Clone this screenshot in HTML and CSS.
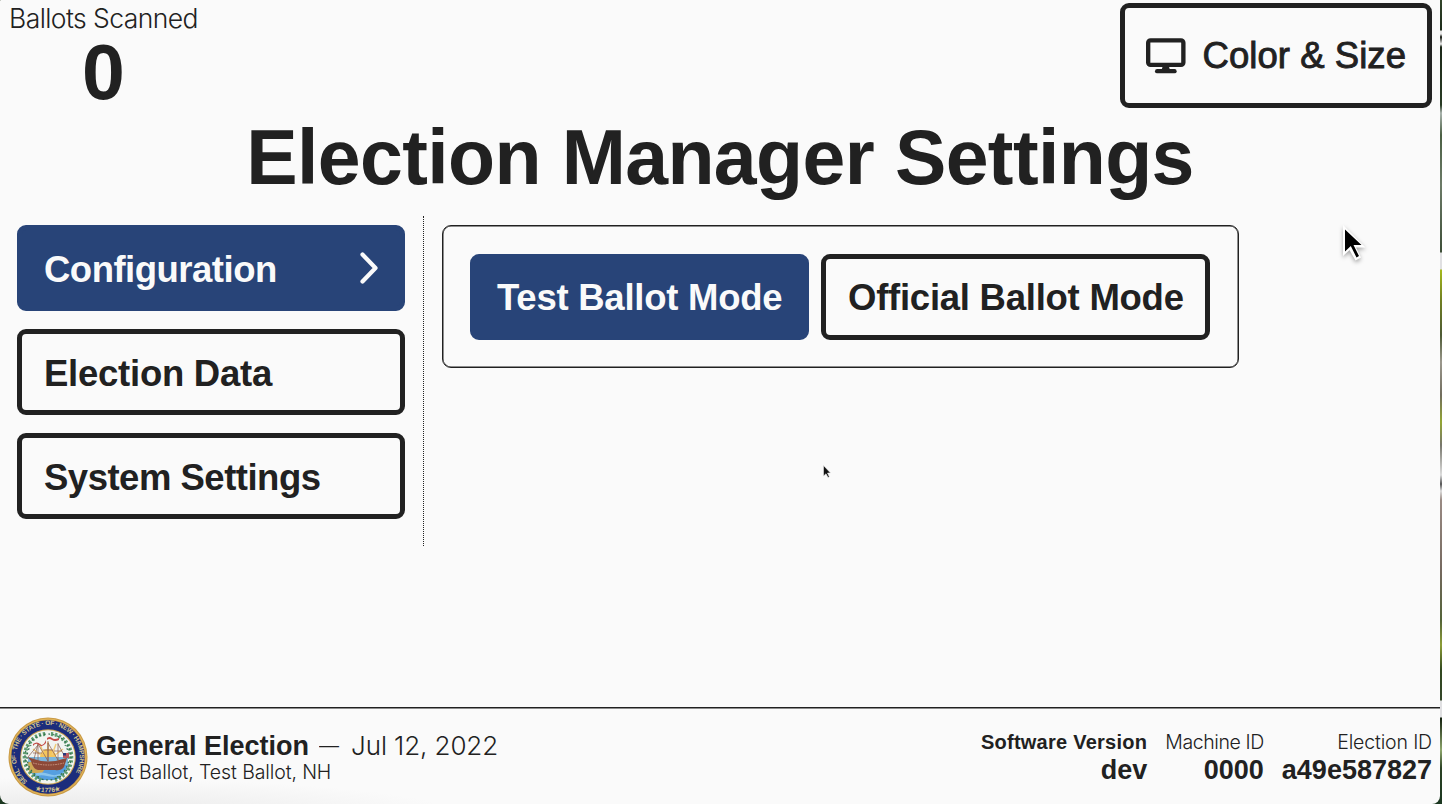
FILE: index.html
```html
<!DOCTYPE html>
<html lang="en">
<head>
<meta charset="utf-8">
<title>Election Manager Settings</title>
<link rel="stylesheet" href="styles.css">
</head>
<body>
<div class="screen">
  <header class="top">
    <div class="counter">
      <div class="counter-label">Ballots Scanned</div>
      <div class="counter-value">0</div>
    </div>
    <button class="btn display-btn">
      <svg class="monitor" viewBox="0 0 40 36" width="40" height="36">
        <rect x="2.2" y="2.2" width="35.6" height="24.8" rx="2.4" fill="none" stroke="#212121" stroke-width="4.4"/>
        <path d="M17 28h6l1.2 4h-8.400z" fill="#212121"/>
        <path d="M11.300 33.300h17.500" stroke="#212121" stroke-width="4.400" stroke-linecap="round"/>
      </svg>
      <span class="display-text">Color &amp; Size</span>
    </button>
  </header>
  <h1>Election Manager Settings</h1>
  <main class="main">
    <nav class="tabs">
      <button class="btn tab primary"><span class="t-conf">Configuration</span>
        <svg class="chevron" viewBox="0 0 20 34" width="20" height="34"><path d="M3.500 3.500L16.500 17L3.500 30.500" fill="none" stroke="#fafafa" stroke-width="4.200" stroke-linecap="round" stroke-linejoin="round"/></svg>
      </button>
      <button class="btn tab"><span>Election Data</span></button>
      <button class="btn tab"><span class="t-sys">System Settings</span></button>
    </nav>
    <section class="panel">
      <button class="btn primary mode-test"><span>Test Ballot Mode</span></button>
      <button class="btn mode-official"><span>Official Ballot Mode</span></button>
    </section>
  </main>
  <footer class="footer">
    <svg class="seal" viewBox="-40 -40 80 80" width="80" height="80">
      <defs>
        <path id="ring" d="M-20.500 24.400A31.900 31.900 0 1 1 20.500 24.400"/>
        <path id="ring-low" d="M-25 25A35.400 35.400 0 0 0 25 25"/>
        <clipPath id="disc"><circle r="26.800"/></clipPath>
      </defs>
      <circle r="39.500" fill="#c99a45"/>
      <circle r="38" fill="none" stroke="#e2b65c" stroke-width="1"/>
      <circle r="36.700" fill="#1c2d7c"/>
      <circle r="27.800" fill="#c9a24f"/>
      <circle r="26.800" fill="#f1f4f1"/>
      <g clip-path="url(#disc)">
        <rect x="-20" y="0" width="40" height="9" fill="#7db7dd"/>
        <path d="M-8 0a8 8 0 0 1 16 0z" fill="#f5c65c"/>
        <path d="M0-1V-15M-4-2L-8-13M4-2L8-13M-7-2L-15-8M7-2L15-8" stroke="#f1cc7a" stroke-width="1.500"/>
        <path d="M-20 8H20Q17 19 8 23H-8Q-17 19-20 8z" fill="#559fe0"/>
        <path d="M-20 5h12l-2 4 7 3-3 4h-13z" fill="#cfa956"/>
        <path d="M-15 17q9-3 16 0t15-2v3q-10 3-17 1t-14 1z" fill="#8bc5ed"/>
      </g>
      <g fill="none" stroke="#5f9d70" stroke-width="4" stroke-dasharray="2.200 1.900">
        <path d="M-7 23A24 24 0 0 1-16-17Q-10-23-2-23"/>
        <path d="M7 23A24 24 0 0 0 16-17Q10-23 2-23"/>
      </g>
      <g fill="none" stroke="#2f6d4c" stroke-width="1.200" stroke-dasharray="1.800 2.700">
        <circle r="23"/><path d="M-9 20A22 22 0 0 1-17-12M9 20A22 22 0 0 0 17-12"/>
      </g>
      <path d="M-17 4L-20.500 0L-14 2Q0 7 15 2L19 1L16 10Q13 14 7 13H-10Q-15 12-17 4z" fill="#8d4938"/>
      <path d="M-15 6Q0 10 16 6" fill="none" stroke="#d3a28c" stroke-width=".9" stroke-dasharray="1.500 1"/>
      <path d="M-10 4V-14M0 6V-16M10 4V-14M-15-4H-6M-5-7H5M6-6H14M-14 2L-10-13L0 4L0-14L10 3M-20 0L-10-12M10-13L17 0" fill="none" stroke="#8a5a4c" stroke-width=".7"/>
      <path d="M-15-13q4-3 7 0t6-4v3q-4 5-7 2t-6 1zM-1-19q3-2 5 0t7 0v2q-4 2-7 0t-5 0z" fill="#c44c48"/>
      <path d="M15-4h6v5h-6z" fill="#b85a61"/><path d="M15-4h3v2.500h-3z" fill="#29397c"/>
      <text class="seal-text"><textPath href="#ring" startOffset="0" textLength="144">SEAL · OF · THE · STATE · OF · NEW · HAMPSHIRE</textPath></text>
      <text class="seal-text"><textPath href="#ring-low" startOffset="50%" text-anchor="middle">★1776★</textPath></text>
    </svg>
    <div class="election">
      <div class="election-title"><b>General Election</b><span class="dash">—</span><span class="date">Jul 12, 2022</span></div>
      <div class="election-sub">Test Ballot, Test Ballot, NH</div>
    </div>
    <dl class="meta">
      <div><dt class="sw">Software Version</dt><dd>dev</dd></div>
      <div><dt>Machine ID</dt><dd>0000</dd></div>
      <div><dt class="eid">Election ID</dt><dd>a49e587827</dd></div>
    </dl>
  </footer>
</div>
<svg class="cursor cursor-large" viewBox="0 0 30 46" width="30" height="46"><path d="M3 2V33L9.500 27L15.500 37.500L21 34.500L16 24.500H25.500Z" fill="#fff"/><path d="M5 6.500V28.500L10.800 23L16.500 34.500L19 33L13.500 22H21.500Z" fill="#000"/></svg>
<svg class="cursor cursor-small" viewBox="0 0 10 16" width="10" height="16"><path d="M1.500 1.500V12L4 9.800L6 13.500L7.300 12.700L5.500 9H8.500Z" fill="#111" stroke="#e8e8e8" stroke-width=".6"/></svg>
</body>
</html>
```
FILE: styles.css
```css
* { box-sizing: border-box; }
html { height: 100%; }
body {
  margin: 0;
  height: 804px;
  overflow: hidden;
  padding-right: 2px;
  font-family: "Liberation Sans", Arial, sans-serif;
  color: #212121;
  background: linear-gradient(#33452a 0, #1c2b1a 30px, #e8e8e8 31px, #e8e8e8 34px, #151a12 37px, #eee 44px, #1c2819 47px, #283b24 105px, #a9b3ad 113px, #4b6044 135px, #6c7b68 185px, #3e4f38 252px, #e0e0e2 253px, #e0e0e2 269px, #a5b91d 270px, #718022 300px, #4d5a34 335px, #9b988d 362px, #716d5e 395px, #93a633 422px, #77766c 445px, #ddd 475px, #555 484px, #ddd 491px, #9a8b84 500px, #75695f 570px, #536338 620px, #8c9d37 645px, #31481f 670px, #344629 700px, #e0e0e2 701px, #e0e0e2 717px, #14210f 718px, #8da66c 750px, #2b4224 768px, #1b3720 804px);
}
.screen {
  height: 804px;
  display: flex;
  flex-direction: column;
  border-radius: 1px 0 8px 9px;
  background: radial-gradient(ellipse 390px 34px at 60px 812px, #e9e9e9, #fafafa) #fafafa;
}
.top {
  display: flex;
  justify-content: space-between;
  align-items: flex-start;
  height: 116px;
  padding: 3px 8px 0 9px;
}
.counter { display: flex; flex-direction: column; align-items: center; }
.counter-label { font: 300 26.500px/30px Inter, sans-serif; letter-spacing: -.57px; white-space: nowrap; }
.counter-value { font-weight: 700; font-size: 77px; line-height: 78px; }
.btn {
  display: flex;
  align-items: center;
  padding: 2px 22px 0;
  border: 5px solid #212121;
  border-radius: 9px;
  background: #fafafa;
  color: #212121;
  font: 700 36.500px/42px "Liberation Sans", Arial, sans-serif;
  white-space: nowrap;
  letter-spacing: -.25px;
}
.t-conf, .t-sys { letter-spacing: -.5px; }
.primary { background: #284478; border-color: #284478; color: #fafafa; }
.display-btn { width: 312px; height: 105px; padding: 1px 21px 0; gap: 17px; font-weight: 400; letter-spacing: .05px; }
.monitor { margin-top: -1px; }
.display-text { -webkit-text-stroke: .9px #212121; }
h1 {
  margin: 0;
  height: 100px;
  text-align: center;
  font-size: 77px;
  line-height: 82px;
  letter-spacing: -.6px;
  white-space: nowrap;
}
.main { display: flex; align-items: flex-start; flex: 1; }
.tabs {
  display: flex;
  flex-direction: column;
  gap: 18px;
  width: 424px;
  height: 330px;
  padding: 9px 18px 0 17px;
  border-right: 1px dotted #212121;
}
.tab { height: 86px; padding-top: 4px; justify-content: space-between; flex: none; }
.chevron { margin: -4px -1px 0 0; }
.panel {
  display: flex;
  gap: 12px;
  margin: 9px 0 0 18px;
  width: 797px;
  height: 143px;
  padding: 28px 27px;
  border: 1px solid #212121;
  border-radius: 9px;
  box-shadow: inset 0 0 0 .5px #212121;
}
.mode-test { width: 339px; height: 86px; }
.mode-official { width: 389px; height: 86px; }
.footer {
  display: flex;
  align-items: flex-start;
  height: 97px;
  padding: 9px 8px 0;
  border-top: 1px solid #212121;
  box-shadow: inset 0 1px #8d8d8d;
}
.seal { flex: none; }
.seal-text { font: 700 6.500px "Liberation Sans", Arial, sans-serif; fill: #d5c58f; }
.election { padding: 14px 0 0 8px; white-space: nowrap; }
.election-title { display: flex; font-size: 27px; line-height: 30px; }
.dash { margin-left: 10px; width: 22px; overflow: hidden; font: 300 20px/30px Inter, sans-serif; }
.date { margin-left: 10px; font: 300 26px/30px Inter, sans-serif; letter-spacing: -.1px; }
.election-sub { font: 300 19.500px/22px Inter, sans-serif; letter-spacing: -.1px; }
.meta { display: flex; gap: 18px; margin: 12px 0 0 auto; text-align: right; white-space: nowrap; }
.meta dt { font: 300 19.500px/26px Inter, sans-serif; letter-spacing: -.4px; }
.meta .eid { letter-spacing: -.15px; }
.meta .sw { font: 700 20px/26px "Liberation Sans", Arial, sans-serif; letter-spacing: .25px; }
.meta dd { margin: 0; font-weight: 700; font-size: 27px; line-height: 30px; }
.cursor { position: absolute; }
.cursor-large { left: 1340px; top: 223px; filter: drop-shadow(0 2px 2px rgba(0,0,0,.35)); }
.cursor-small { left: 822px; top: 464px; }
```
